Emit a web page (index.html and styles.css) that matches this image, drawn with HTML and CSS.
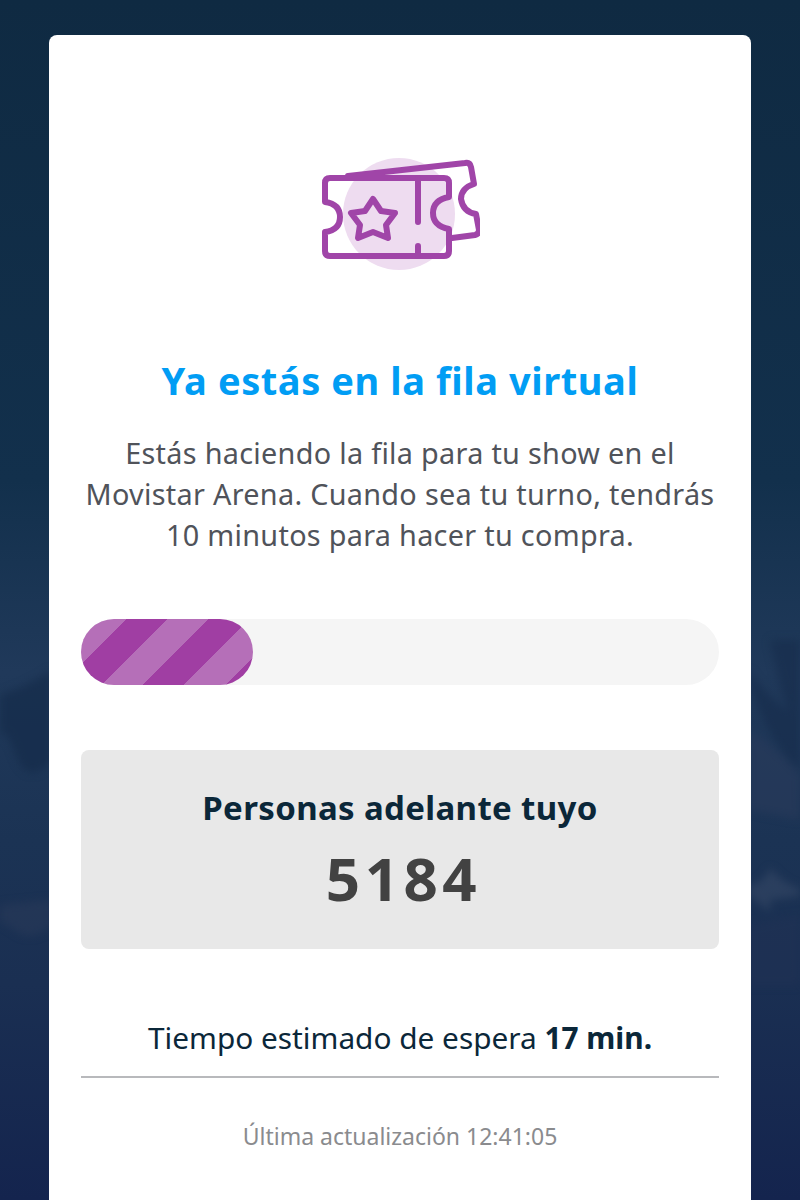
FILE: index.html
```html
<!DOCTYPE html>
<html lang="es">
<head>
    <meta charset="UTF-8">
    <meta name="viewport" content="width=device-width, initial-scale=1.0">
    <title>Fila virtual</title>
    <link rel="stylesheet" href="styles.css">
</head>
<body>
    <svg class="backdrop" viewBox="0 0 800 1200" width="800" height="1200" aria-hidden="true">
        <path d="M0 695 Q30 685 52 670 L52 760 Q30 785 18 760 Q5 725 0 735Z" fill="#152c4b" opacity=".75"/>
        <path d="M0 905 L52 900 L52 925 Q30 945 12 928 L0 922Z" fill="#2a3a59" opacity=".55"/>
        <path d="M748 680 Q770 745 800 770 L800 640 L770 640 Q785 710 790 712 Q770 700 748 670Z" fill="#152c4b" opacity=".6"/>
        <path d="M748 730 Q775 745 800 775 L800 820 L748 810Z" fill="#2b3c5c" opacity=".5"/>
        <path d="M748 885 Q762 885 770 868 Q785 885 800 888 L800 896 L770 900 L770 912 L748 895Z" fill="#364866" opacity=".6"/>
        <path d="M748 925 L800 915 L800 985 L748 985Z" fill="#243256" opacity=".4"/>
    </svg>
    <div class="card">
        <div class="icon-wrap">
            <svg class="ticket" viewBox="320 158 160 114" width="160" height="114" aria-hidden="true">
                <circle cx="399" cy="214" r="56" fill="#eedcf0"/>
                <path d="M348 176 L465 163 Q470 162 471 167 L474 184 Q461 188 461 199 Q463 212 476 214 L479 230 Q479 234 475 235 L452 238" fill="none" stroke="#a045a8" stroke-width="6" stroke-linecap="round" stroke-linejoin="round"/>
                <path d="M330 178 H444 Q449 178 449 183 V197 Q433 200 433 213 Q433 226 449 229 V251 Q449 256 444 256 H330 Q325 256 325 251 V232 Q340 230 340 217 Q340 204 325 202 V183 Q325 178 330 178Z" fill="none" stroke="#a045a8" stroke-width="6" stroke-linejoin="round"/>
                <path d="M418 178 V222 M418 246 V256" fill="none" stroke="#a045a8" stroke-width="6" stroke-linecap="round"/>
                <path d="M373 199 L381 211 L395 213 L386 225 L388 238 L373 232 L358 238 L360 225 L351 213 L365 211Z" fill="none" stroke="#a045a8" stroke-width="6" stroke-linejoin="round"/>
            </svg>
        </div>
        <h1>Ya estás en la fila virtual</h1>
        <p class="intro">Estás haciendo la fila para tu show en el Movistar Arena. Cuando sea tu turno, tendrás 10 minutos para hacer tu compra.</p>
        <div class="progress-bar">
            <div class="progress" style="width: 27%"></div>
        </div>
        <div class="queue-box">
            <div class="queue-label">Personas adelante tuyo</div>
            <div class="queue-number">5184</div>
        </div>
        <p class="wait">Tiempo estimado de espera <b>17 min.</b></p>
        <p class="updated">Última actualización 12:41:05</p>
    </div>
</body>
</html>
```

FILE: styles.css
```css
html, body {
    margin: 0;
    height: 1200px;
    overflow: hidden;
}
body {
    font-family: "Noto Sans", sans-serif;
    background: linear-gradient(180deg, #0f2a42 0%, #12304c 40%, #20395a 56%, #1b3354 70%, #1a2f52 82%, #14244e 100%);
    position: relative;
    text-align: center;
}
.backdrop {
    position: absolute;
    top: 0;
    left: 0;
    filter: blur(4px);
}
.card {
    position: relative;
    box-sizing: border-box;
    width: 702px;
    height: 1165px;
    margin: 35px auto 0;
    padding: 123px 32px 0;
    background: white;
    border-radius: 8px 8px 0 0;
}
.icon-wrap {
    display: flex;
    justify-content: center;
    height: 114px;
}
h1 {
    margin: 84px 0 0;
    font-size: 38px;
    line-height: 48px;
    font-weight: 700;
    letter-spacing: 0.58px;
    color: #019df4;
}
.intro {
    margin: 28px 0 0;
    font-size: 28.8px;
    line-height: 41px;
    letter-spacing: 0.3px;
    color: #50535a;
}
.progress-bar {
    margin-top: 64px;
    height: 66px;
    background-color: #f5f5f5;
    border-radius: 33px;
}
.progress {
    height: 66px;
    border-radius: 33px;
    background-image: repeating-linear-gradient(135deg, #b56fb8 3.5px, #b56fb8 32.5px, #a03ea3 32.5px, #a03ea3 61.5px);
}
.queue-box {
    margin-top: 65px;
    height: 199px;
    box-sizing: border-box;
    padding-top: 36px;
    background-color: #e8e8e8;
    border-radius: 8px;
}
.queue-label {
    font-size: 33px;
    line-height: 44px;
    font-weight: 700;
    letter-spacing: 0.35px;
    color: #0b2739;
}
.queue-number {
    margin-top: 16px;
    padding-left: 7px;
    font-size: 60px;
    line-height: 64px;
    font-weight: 700;
    color: #424242;
    letter-spacing: 4.5px;
}
.wait {
    margin: 68px 0 0;
    padding-bottom: 17px;
    font-size: 29.8px;
    line-height: 42px;
    color: #0b2739;
    border-bottom: 2px solid #b8b9bc;
}
.updated {
    margin: 40px 0 0;
    font-size: 23px;
    line-height: 36px;
    color: #8a8b8e;
}
```
